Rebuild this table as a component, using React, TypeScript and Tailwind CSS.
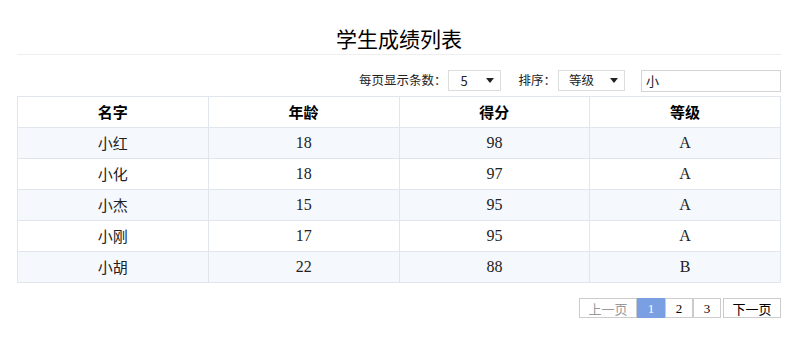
import { useState } from 'react'

interface Student {
    name: string
    age: number
    score: number
    grade: string
}

const students: Student[] = [
    { name: '小红', age: 18, score: 98, grade: 'A' },
    { name: '小化', age: 18, score: 97, grade: 'A' },
    { name: '小杰', age: 15, score: 95, grade: 'A' },
    { name: '小刚', age: 17, score: 95, grade: 'A' },
    { name: '小胡', age: 22, score: 88, grade: 'B' },
]

const sans = "font-['Microsoft_YaHei','Noto_Sans_CJK_SC',sans-serif]"
const serif = "font-['Liberation_Serif','Noto_Sans_CJK_SC',serif]"

function Caret() {
    return (
        <svg width="8" height="5" viewBox="0 0 8 5" className="ml-auto">
            <path d="M0 0h8L4 5z" fill="#222" />
        </svg>
    )
}

export default function App() {
    const [page, setPage] = useState(1)
    const [keyword, setKeyword] = useState('小')

    return (
        <div className={`w-[800px] h-[355px] bg-white pl-[17px] pt-[24px] ${sans} text-[#222]`}>
            <div className="w-[764px]">
                <h1 className="text-center text-[21px] leading-[28px] text-black">学生成绩列表</h1>
                <div className="mt-[2px] border-b border-[#eeeeee]" />

                <div className="mt-[15px] flex items-center justify-end text-[12.5px] h-[21px]">
                    <span>每页显示条数：</span>
                    <div className="ml-[2px] w-[53px] h-[21px] border border-[#dcdcdc] flex items-center pl-[11px] pr-[6px] text-[13px]">
                        <span>5</span>
                        <Caret />
                    </div>
                    <span className="ml-[17px]">排序：</span>
                    <div className="ml-[2px] w-[67px] h-[21px] border border-[#dcdcdc] flex items-center pl-[10px] pr-[6px] text-[12.5px]">
                        <span>等级</span>
                        <Caret />
                    </div>
                    <input
                        value={keyword}
                        onChange={(e) => setKeyword(e.target.value)}
                        className="ml-[16px] w-[140px] h-[22px] border border-[#d4d4d4] px-[4px] text-[13px] outline-none"
                    />
                </div>

                <table className="mt-[5px] w-[764px] border-collapse table-fixed">
                    <thead>
                        <tr className="h-[31px]">
                            {['名字', '年龄', '得分', '等级'].map((h) => (
                                <th key={h} className="border border-[#e1e6ec] text-[15px] font-bold text-black">
                                    {h}
                                </th>
                            ))}
                        </tr>
                    </thead>
                    <tbody>
                        {students.map((s, i) => (
                            <tr key={s.name} className={`h-[31px] ${i % 2 === 0 ? 'bg-[#f5f8fc]' : 'bg-white'}`}>
                                <td className="border border-[#e1e6ec] text-center text-[15px]">{s.name}</td>
                                <td className={`border border-[#e1e6ec] text-center text-[16px] ${serif}`}>{s.age}</td>
                                <td className={`border border-[#e1e6ec] text-center text-[16px] ${serif}`}>{s.score}</td>
                                <td className={`border border-[#e1e6ec] text-center text-[16px] ${serif}`}>{s.grade}</td>
                            </tr>
                        ))}
                    </tbody>
                </table>

                <div className="mt-[15px] flex justify-end text-[13px]">
                    <button className="w-[58px] h-[20px] border border-[#cccccc] text-[#999999] leading-none">上一页</button>
                    {[1, 2, 3].map((p) => (
                        <button
                            key={p}
                            onClick={() => setPage(p)}
                            className={`w-[28px] h-[20px] border ${serif} text-[13px] leading-none ${
                                p === page ? 'bg-[#7a9fe3] border-[#7a9fe3] text-white' : 'border-[#cccccc] text-black'
                            }`}
                        >
                            {p}
                        </button>
                    ))}
                    <button className="ml-[2px] w-[58px] h-[20px] border border-[#cccccc] text-black leading-none">下一页</button>
                </div>
            </div>
        </div>
    )
}
